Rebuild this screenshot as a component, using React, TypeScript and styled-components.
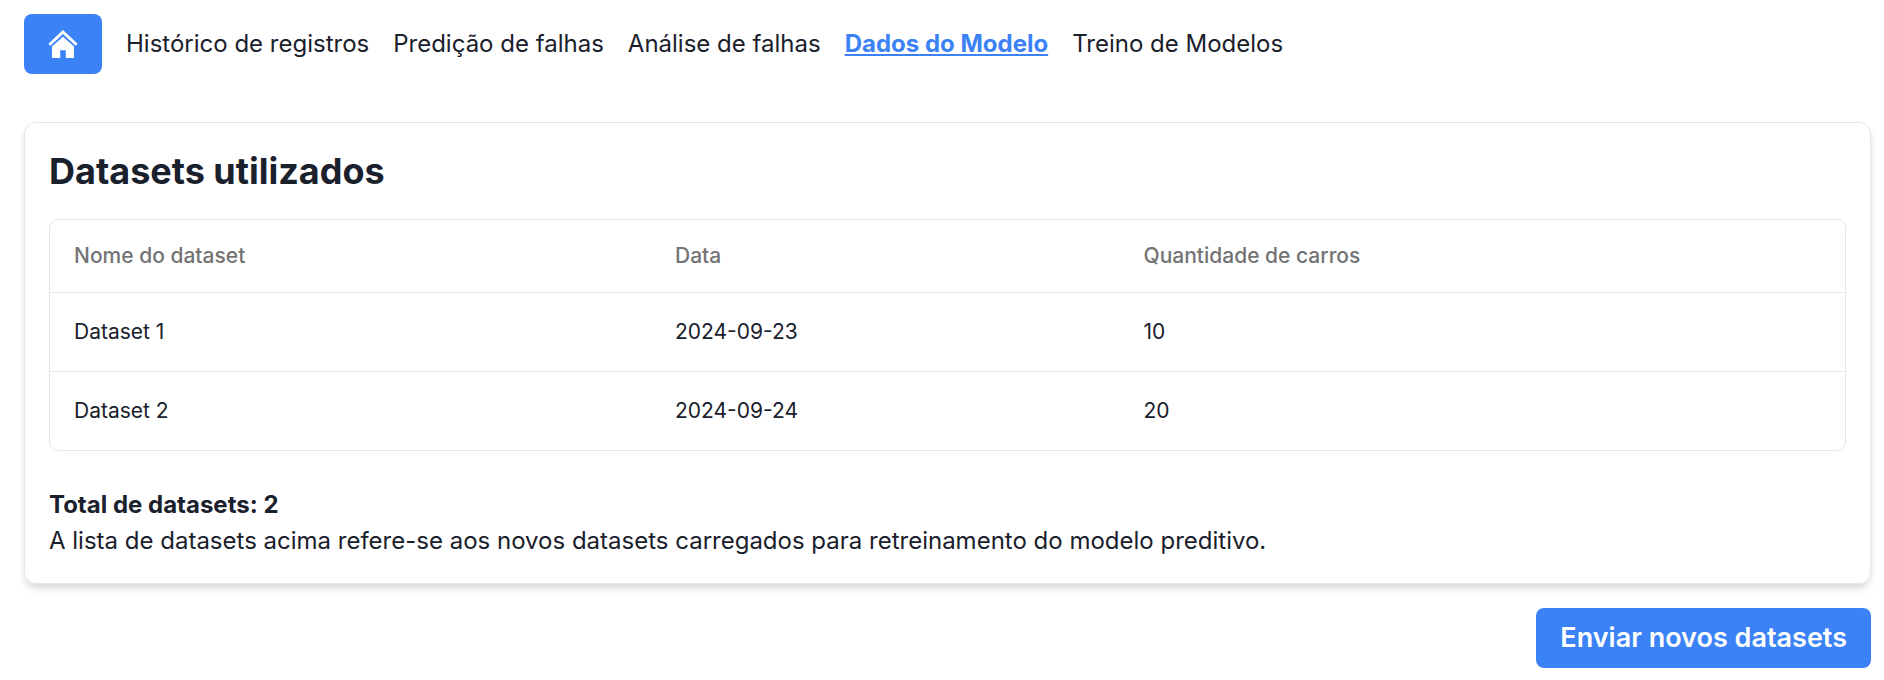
import React from "react";
import styled, { createGlobalStyle } from "styled-components";

const Global = createGlobalStyle`
  *, *::before, *::after { box-sizing: border-box; }
  body { margin: 0; background: #fff; color: #1a202c; font: 400 24px/36px Inter, "Liberation Sans", sans-serif; }
  #root { overflow: hidden; }
`;
const Page = styled.main`padding: 14px 13px 12px 24px;`;
const Nav = styled.nav`display: flex; align-items: center; gap: 24px; height: 60px;`;
const HomeButton = styled.a`
  display: flex; align-items: center; justify-content: center;
  width: 78px; height: 60px; border-radius: 8px; background: #3b82f6; color: #fff;
`;
const NavLink = styled.a<{ $active?: boolean }>`
  white-space: nowrap;
  color: ${(p) => (p.$active ? "#3b82f6" : "#1a202c")};
  font-weight: ${(p) => (p.$active ? 700 : 400)};
  text-decoration: ${(p) => (p.$active ? "underline" : "none")};
`;
const Card = styled.section`
  margin-top: 48px; padding: 24px; height: 462px;
  border: 1px solid #e5e7eb; border-radius: 12px;
  box-shadow: 0 6px 9px -1px rgba(0,0,0,.1), 0 3px 6px -2px rgba(0,0,0,.1);
`;
const Title = styled.h1`margin: 0 0 24px; font-size: 36px; line-height: 48px; font-weight: 700;`;
const Table = styled.div`border: 1px solid #e2e8f0; border-radius: 9px;`;
const Row = styled.div<{ $head?: boolean }>`
  display: grid; grid-template-columns: 601px 468.5px 1fr; align-items: center;
  height: ${(p) => (p.$head ? 72 : 79)}px; padding: 0 24px;
  font-size: 21px; line-height: 30px;
  color: ${(p) => (p.$head ? "#737373" : "#1a202c")};
  font-weight: ${(p) => (p.$head ? 500 : 400)};
  & + & { border-top: 1px solid #e2e8f0; }
`;
const Summary = styled.div`margin-top: 36px;`;
const Total = styled.p`margin: 0; font-weight: 700;`;
const Note = styled.p`margin: 0;`;
const Actions = styled.div`display: flex; justify-content: flex-end; margin-top: 24px;`;
const Submit = styled.button`
  height: 60px; padding: 0 24px; border: 0; border-radius: 8px;
  background: #3b82f6; color: #fff; font: 600 27px/42px Inter, sans-serif;
`;

const links = ["Histórico de registros", "Predição de falhas", "Análise de falhas", "Dados do Modelo", "Treino de Modelos"];
const rows = [["Dataset 1", "2024-09-23", "10"], ["Dataset 2", "2024-09-24", "20"]];

export default function App() {
  return (
    <Page>
      <Global />
      <Nav>
        <HomeButton>
          <svg width="30" height="30" viewBox="0 0 30 30" fill="currentColor">
            <path d="M15 1 29.6 14.7 27.6 16.7 15 5.1 2.4 16.7.4 14.7Z" />
            <path d="M15 7.7 26 17.6V29H17.8V21.3H12.2V29H4V17.6Z" />
          </svg>
        </HomeButton>
        {links.map((l) => <NavLink key={l} $active={l === "Dados do Modelo"}>{l}</NavLink>)}
      </Nav>
      <Card>
        <Title>Datasets utilizados</Title>
        <Table>
          <Row $head><span>Nome do dataset</span><span>Data</span><span>Quantidade de carros</span></Row>
          {rows.map((r) => <Row key={r[0]}>{r.map((c) => <span key={c}>{c}</span>)}</Row>)}
        </Table>
        <Summary>
          <Total>Total de datasets: 2</Total>
          <Note>A lista de datasets acima refere-se aos novos datasets carregados para retreinamento do modelo preditivo.</Note>
        </Summary>
      </Card>
      <Actions><Submit>Enviar novos datasets</Submit></Actions>
    </Page>
  );
}
